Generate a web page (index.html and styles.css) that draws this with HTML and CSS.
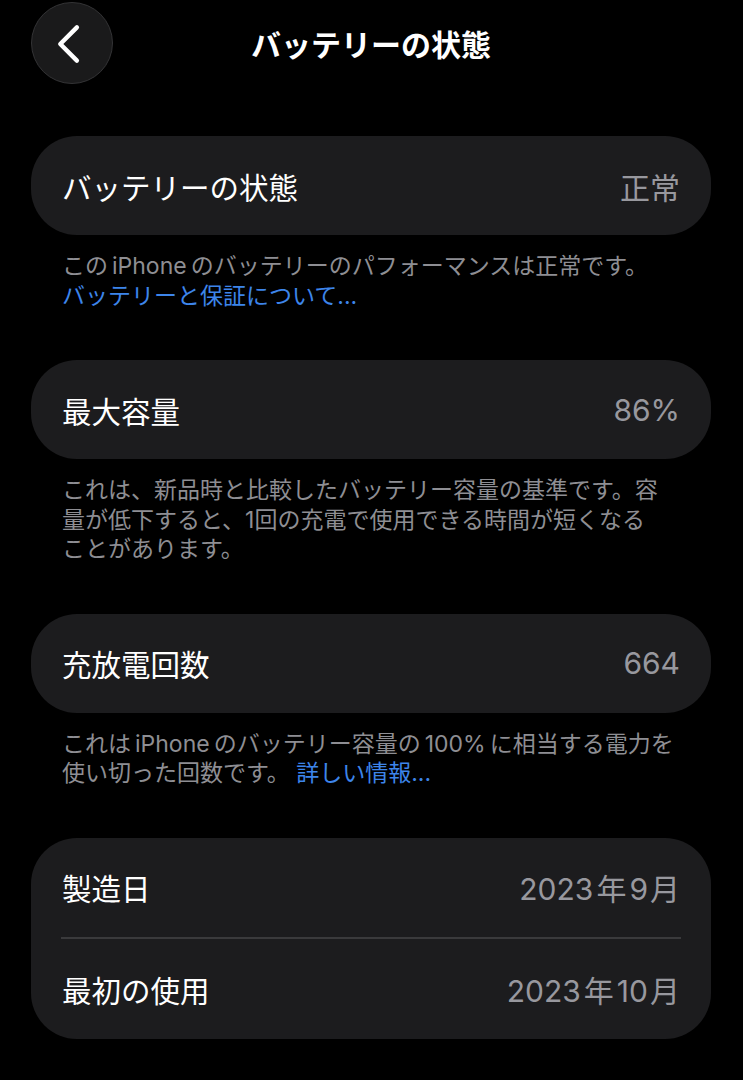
FILE: index.html
```html
<!DOCTYPE html>
<html lang="ja">
<head>
	<meta charset="UTF-8">
	<title>バッテリーの状態</title>
	<link rel="stylesheet" href="styles.css">
</head>
<body>
	<div class="nav">
		<div class="back">
			<svg width="82" height="82" viewBox="0 0 82 82"><path d="M46 24 L29 41 L46 58" fill="none" stroke="#fff" stroke-width="4.5" stroke-linecap="round" stroke-linejoin="round"/></svg>
		</div>
		<div class="nav_title">バッテリーの状態</div>
		<div></div>
	</div>
	<div class="content">
		<div class="card">
			<div class="row"><span class="label">バッテリーの状態</span><span class="value">正常</span></div>
		</div>
		<div class="note">この<span class="en">iPhone</span>のバッテリーのパフォーマンスは正常です。<br><a class="link">バッテリーと保証について...</a></div>

		<div class="card">
			<div class="row"><span class="label">最大容量</span><span class="value">86%</span></div>
		</div>
		<div class="note">これは、新品時と比較したバッテリー容量の基準です。容<br>量が低下すると、1回の充電で使用できる時間が短くなる<br>ことがあります。</div>

		<div class="card">
			<div class="row"><span class="label">充放電回数</span><span class="value">664</span></div>
		</div>
		<div class="note">これは<span class="en">iPhone</span>のバッテリー容量の<span class="en">100%</span>に相当する電力を<br>使い切った回数です。 <a class="link">詳しい情報...</a></div>

		<div class="card">
			<div class="row"><span class="label">製造日</span><span class="value"><span class="en">2023</span>年<span class="en">9</span>月</span></div>
			<div class="divider"></div>
			<div class="row"><span class="label">最初の使用</span><span class="value"><span class="en">2023</span>年<span class="en">10</span>月</span></div>
		</div>
	</div>
</body>
</html>
```

FILE: styles.css
```css
*{box-sizing: border-box;}
html,body{margin:0;background:#000;}
body{font-family:Inter,"Noto Sans CJK JP",sans-serif;color:#fff;width:743px;height:1080px;overflow:hidden;}
.nav{display:grid;grid-template-columns:82px 1fr 82px;align-items:center;padding:1px 32px 0 31px;height:84px;}
.back{width:82px;height:82px;border-radius:50%;background:#1a1a1b;border:1px solid #333335;display:flex;}
.back svg{display:block;}
.nav_title{text-align:center;font-size:30px;font-weight:bold;}
.content{padding:52px 32px 0 31px;}
.card{background:#1c1c1e;border-radius:46px;}
.row{height:99px;display:flex;align-items:center;justify-content:space-between;padding:0 31px;font-size:29.5px;}
.card .row + .divider + .row{height:100px;}
.divider{height:2px;background:#3a3a3c;margin:0 30px;}
.label{color:#fff;}
.value{color:#98989e;font-size:30px;}
.value .en{margin:0 3px;}
.value .en:last-of-type{margin-right:2px;}
.note{padding:0 31px;margin:17px 0 49px;font-size:23px;line-height:29.5px;color:#8e8e93;white-space:nowrap;}
.note .en{margin:0 4px;}
.link{color:#3d85ea;}
```
